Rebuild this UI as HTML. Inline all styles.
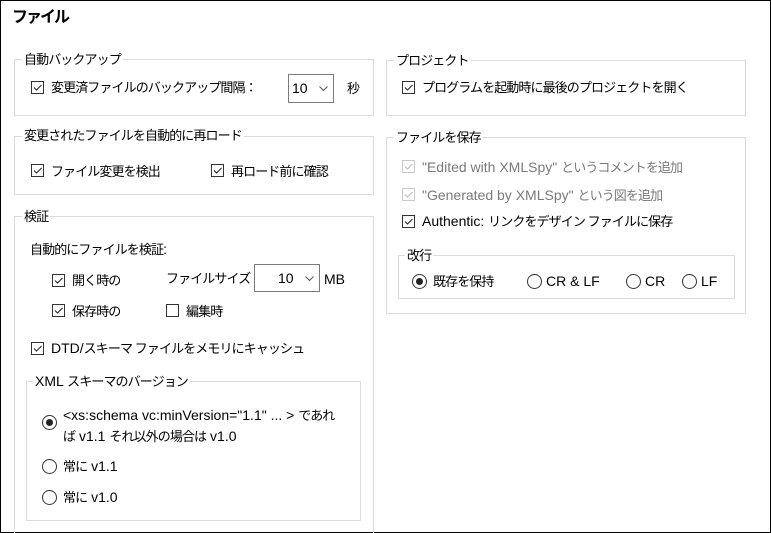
<!DOCTYPE html>
<html><head><meta charset="utf-8"><style>
html,body{margin:0;width:771px;height:533px;overflow:hidden}
body{position:relative;background:#fff;font-family:"Liberation Sans","Noto Sans CJK JP",sans-serif;font-size:14px;color:#000}
#f{position:absolute;left:0;top:0;width:769px;height:531px;border:1px solid #000}
.a{position:absolute;white-space:nowrap;line-height:18px}
.g{position:absolute;border:1px solid #dcdcdc}
.lg{position:absolute;background:#fff;padding:0 2px;line-height:18px;white-space:nowrap}
.cb{position:absolute;width:11px;height:11px;border:1px solid #333;background:#fff}
.cb svg{position:absolute;left:0;top:0}
.cb.d{border-color:#c8c8c8}
.rb{position:absolute;width:13px;height:13px;border:1px solid #333;border-radius:50%;background:#fff}
.rb.on::after{content:"";position:absolute;left:3px;top:3px;width:7px;height:7px;border-radius:50%;background:#222}
.cmb{position:absolute;border:1px solid #7a7a7a;background:#fff}
.dis{color:#7a7a7a}
j{font-size:13px;letter-spacing:-0.9px}
</style></head><body><div id="f"></div>
<div class="a" style="left:12px;top:9px;font-size:16px;font-weight:bold;letter-spacing:-2px">ファイル</div>

<div class="g" style="left:14px;top:59px;width:358px;height:55px"></div>
<div class="lg" style="left:22px;top:50px"><j>自動バックアップ</j></div>
<div class="cb" style="left:31px;top:81px"><svg width="11" height="11"><path d="M2 5.5l2.5 2.5 5-5" fill="none" stroke="#222"/></svg></div>
<div class="a" style="left:51px;top:78px"><j>変更済ファイルのバックアップ間隔：</j></div>
<div class="cmb" style="left:288px;top:74px;width:44px;height:27px"><span class="a" style="left:3px;top:4px">10</span><svg style="position:absolute;left:30px;top:11px" width="9" height="6"><path d="M0.5 0.5l4 4 4-4" fill="none" stroke="#555"/></svg></div>
<div class="a" style="left:347px;top:79px"><j>秒</j></div>

<div class="g" style="left:14px;top:136px;width:358px;height:57px"></div>
<div class="lg" style="left:22px;top:126px"><j>変更されたファイルを自動的に再ロード</j></div>
<div class="cb" style="left:31px;top:164px"><svg width="11" height="11"><path d="M2 5.5l2.5 2.5 5-5" fill="none" stroke="#222"/></svg></div>
<div class="a" style="left:51px;top:162px"><j>ファイル変更を検出</j></div>
<div class="cb" style="left:211px;top:164px"><svg width="11" height="11"><path d="M2 5.5l2.5 2.5 5-5" fill="none" stroke="#222"/></svg></div>
<div class="a" style="left:231px;top:162px"><j>再ロード前に確認</j></div>

<div class="g" style="left:14px;top:216px;width:358px;height:330px"></div>
<div class="lg" style="left:22px;top:207px"><j>検証</j></div>
<div class="a" style="left:30px;top:240px"><j>自動的にファイルを検証</j>:</div>
<div class="cb" style="left:52px;top:274px"><svg width="11" height="11"><path d="M2 5.5l2.5 2.5 5-5" fill="none" stroke="#222"/></svg></div>
<div class="a" style="left:72px;top:271px"><j>開く時の</j></div>
<div class="a" style="left:166px;top:269px"><j>ファイルサイズ</j></div>
<div class="cmb" style="left:254px;top:264px;width:64px;height:26px"><span class="a" style="left:23px;top:4px">10</span><svg style="position:absolute;left:50px;top:11px" width="9" height="6"><path d="M0.5 0.5l4 4 4-4" fill="none" stroke="#555"/></svg></div>
<div class="a" style="left:324px;top:270px">MB</div>
<div class="cb" style="left:52px;top:304px"><svg width="11" height="11"><path d="M2 5.5l2.5 2.5 5-5" fill="none" stroke="#222"/></svg></div>
<div class="a" style="left:72px;top:302px"><j>保存時の</j></div>
<div class="cb" style="left:166px;top:304px"></div>
<div class="a" style="left:186px;top:302px"><j>編集時</j></div>
<div class="cb" style="left:31px;top:342px"><svg width="11" height="11"><path d="M2 5.5l2.5 2.5 5-5" fill="none" stroke="#222"/></svg></div>
<div class="a" style="left:51px;top:339px">DTD/<j>スキーマ ファイルをメモリにキャッシュ</j></div>

<div class="g" style="left:26px;top:381px;width:333px;height:138px"></div>
<div class="lg" style="left:33px;top:372px">XML <j>スキーマのバージョン</j></div>
<div class="rb on" style="left:42px;top:415px"></div>
<div class="a" style="left:63px;top:405px;line-height:20px">&lt;xs:schema vc:minVersion="1.1" ... &gt; <j>であれ</j><br><j>ば</j> v1.1 <j>それ以外の場合は</j> v1.0</div>
<div class="rb" style="left:42px;top:459px"></div>
<div class="a" style="left:63px;top:457px"><j>常に</j> v1.1</div>
<div class="rb" style="left:42px;top:490px"></div>
<div class="a" style="left:63px;top:488px"><j>常に</j> v1.0</div>

<div class="g" style="left:386px;top:60px;width:358px;height:54px"></div>
<div class="lg" style="left:394px;top:51px"><j>プロジェクト</j></div>
<div class="cb" style="left:402px;top:81px"><svg width="11" height="11"><path d="M2 5.5l2.5 2.5 5-5" fill="none" stroke="#222"/></svg></div>
<div class="a" style="left:422px;top:78px"><j>プログラムを起動時に最後のプロジェクトを開く</j></div>

<div class="g" style="left:386px;top:137px;width:358px;height:175px"></div>
<div class="lg" style="left:394px;top:128px"><j>ファイルを保存</j></div>
<div class="cb d" style="left:402px;top:160px"><svg width="11" height="11"><path d="M2 5.5l2.5 2.5 5-5" fill="none" stroke="#bbb"/></svg></div>
<div class="a dis" style="left:422px;top:158px">"Edited with XMLSpy" <j>というコメントを追加</j></div>
<div class="cb d" style="left:402px;top:188px"><svg width="11" height="11"><path d="M2 5.5l2.5 2.5 5-5" fill="none" stroke="#bbb"/></svg></div>
<div class="a dis" style="left:422px;top:186px">"Generated by XMLSpy" <j>という図を追加</j></div>
<div class="cb" style="left:402px;top:215px"><svg width="11" height="11"><path d="M2 5.5l2.5 2.5 5-5" fill="none" stroke="#222"/></svg></div>
<div class="a" style="left:422px;top:212px">Authentic: <j>リンクをデザイン ファイルに保存</j></div>

<div class="g" style="left:398px;top:255px;width:335px;height:42px"></div>
<div class="lg" style="left:405px;top:246px"><j>改行</j></div>
<div class="rb on" style="left:412px;top:274px"></div>
<div class="a" style="left:433px;top:272px"><j>既存を保持</j></div>
<div class="rb" style="left:527px;top:274px"></div>
<div class="a" style="left:546px;top:272px">CR &amp; LF</div>
<div class="rb" style="left:626px;top:274px"></div>
<div class="a" style="left:645px;top:272px">CR</div>
<div class="rb" style="left:682px;top:274px"></div>
<div class="a" style="left:701px;top:272px">LF</div>
</body></html>
